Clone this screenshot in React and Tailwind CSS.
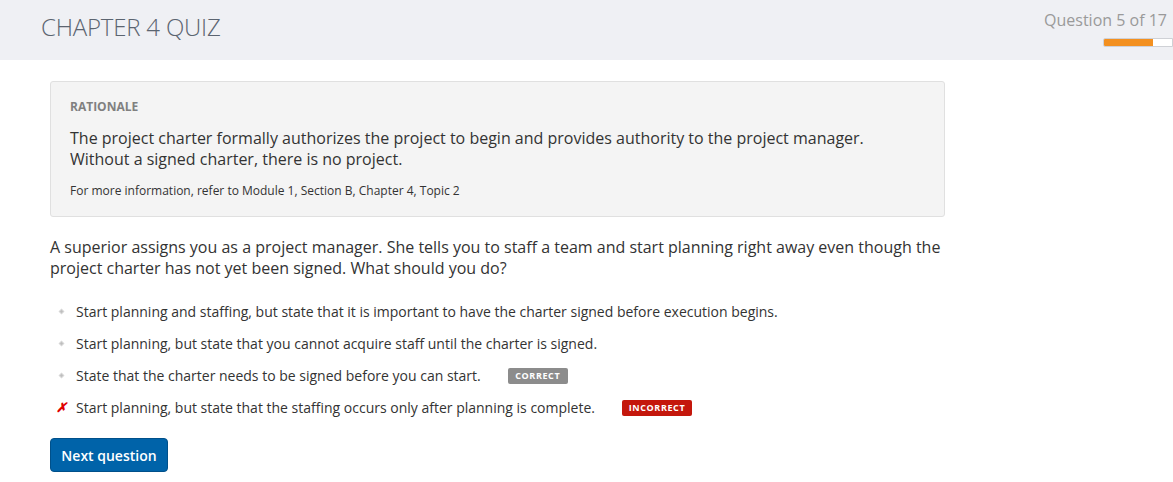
import React from "react";

function Bullet() {
  return (
    <svg width="7" height="7" viewBox="0 0 7 7" className="block">
      <path d="M3.5 0.5 L6.5 3.5 L3.5 6.5 L0.5 3.5 Z" fill="#d6d6d6" />
      <path d="M3.5 2 L5 3.5 L3.5 5 L2 3.5 Z" fill="#bdbdbd" />
    </svg>
  );
}

function Option({ icon, text, badge }) {
  return (
    <div className="flex items-center h-[32px]">
      <div className="w-[26px] flex justify-center pr-[4px] shrink-0">{icon}</div>
      <span className="text-[14px] text-[#333]">{text}</span>
      {badge}
    </div>
  );
}

export default function App() {
  return (
    <div className="min-h-screen bg-white" style={{ fontFamily: '"Open Sans", sans-serif' }}>
      <header className="h-[60px] bg-[#eff0f4] flex justify-between">
        <h1 className="pl-[41px] pt-[12px] text-[24px] leading-[30px] font-light text-[#5b6470] tracking-[-0.2px]">
          CHAPTER 4 QUIZ
        </h1>
        <div className="flex flex-col items-end pt-[9px]">
          <div className="text-[16px] leading-[22px] text-[#9a9a9a] mr-[6px]">Question 5 of 17</div>
          <div className="mt-[7px] w-[70px] h-[9px] bg-white border border-[#cfd1d6] rounded-l-[2px] overflow-hidden">
            <div className="h-full bg-[#f39020]" style={{ width: "49px" }} />
          </div>
        </div>
      </header>

      <main className="pl-[50px] pr-[228px] pt-[21px]">
        <section className="bg-[#f4f4f4] border border-[#e0e0e0] rounded-[3px] pl-[19px] pr-[20px] pt-[17px] pb-[17px]">
          <div className="text-[12px] leading-[16px] font-bold text-[#808080]">RATIONALE</div>
          <p className="mt-[13px] text-[16px] leading-[21px] text-[#333]">
            The project charter formally authorizes the project to begin and provides authority to the project manager.
            <br />
            Without a signed charter, there is no project.
          </p>
          <p className="mt-[13px] text-[12px] leading-[16px] text-[#333]">
            For more information, refer to Module 1, Section B, Chapter 4, Topic 2
          </p>
        </section>

        <p className="mt-[20px] text-[16px] leading-[21px] text-[#333] pr-[4px]">
          A superior assigns you as a project manager. She tells you to staff a team and start planning right away even though the project charter has not yet been signed. What should you do?
        </p>

        <div className="mt-[16px]">
          <Option icon={<Bullet />} text="Start planning and staffing, but state that it is important to have the charter signed before execution begins." />
          <Option icon={<Bullet />} text="Start planning, but state that you cannot acquire staff until the charter is signed." />
          <Option
            icon={<Bullet />}
            text="State that the charter needs to be signed before you can start."
            badge={
              <span className="ml-[27px] mt-[1px] inline-flex items-center justify-center w-[60px] h-[16px] rounded-[2px] bg-[#8c8c8c] text-white text-[9px] font-bold tracking-[0.6px]">
                CORRECT
              </span>
            }
          />
          <Option
            icon={<span className="text-[#e00000] text-[13px] font-bold leading-none italic">✗</span>}
            text="Start planning, but state that the staffing occurs only after planning is complete."
            badge={
              <span className="ml-[27px] mt-[1px] inline-flex items-center justify-center w-[70px] h-[16px] rounded-[2px] bg-[#c4170c] text-white text-[9px] font-bold tracking-[0.6px]">
                INCORRECT
              </span>
            }
          />
        </div>

        <button className="mt-[15px] h-[34px] w-[118px] rounded-[4px] bg-[#0063a9] border border-[#00508a] text-white text-[14px] font-semibold">
          Next question
        </button>
      </main>
    </div>
  );
}
